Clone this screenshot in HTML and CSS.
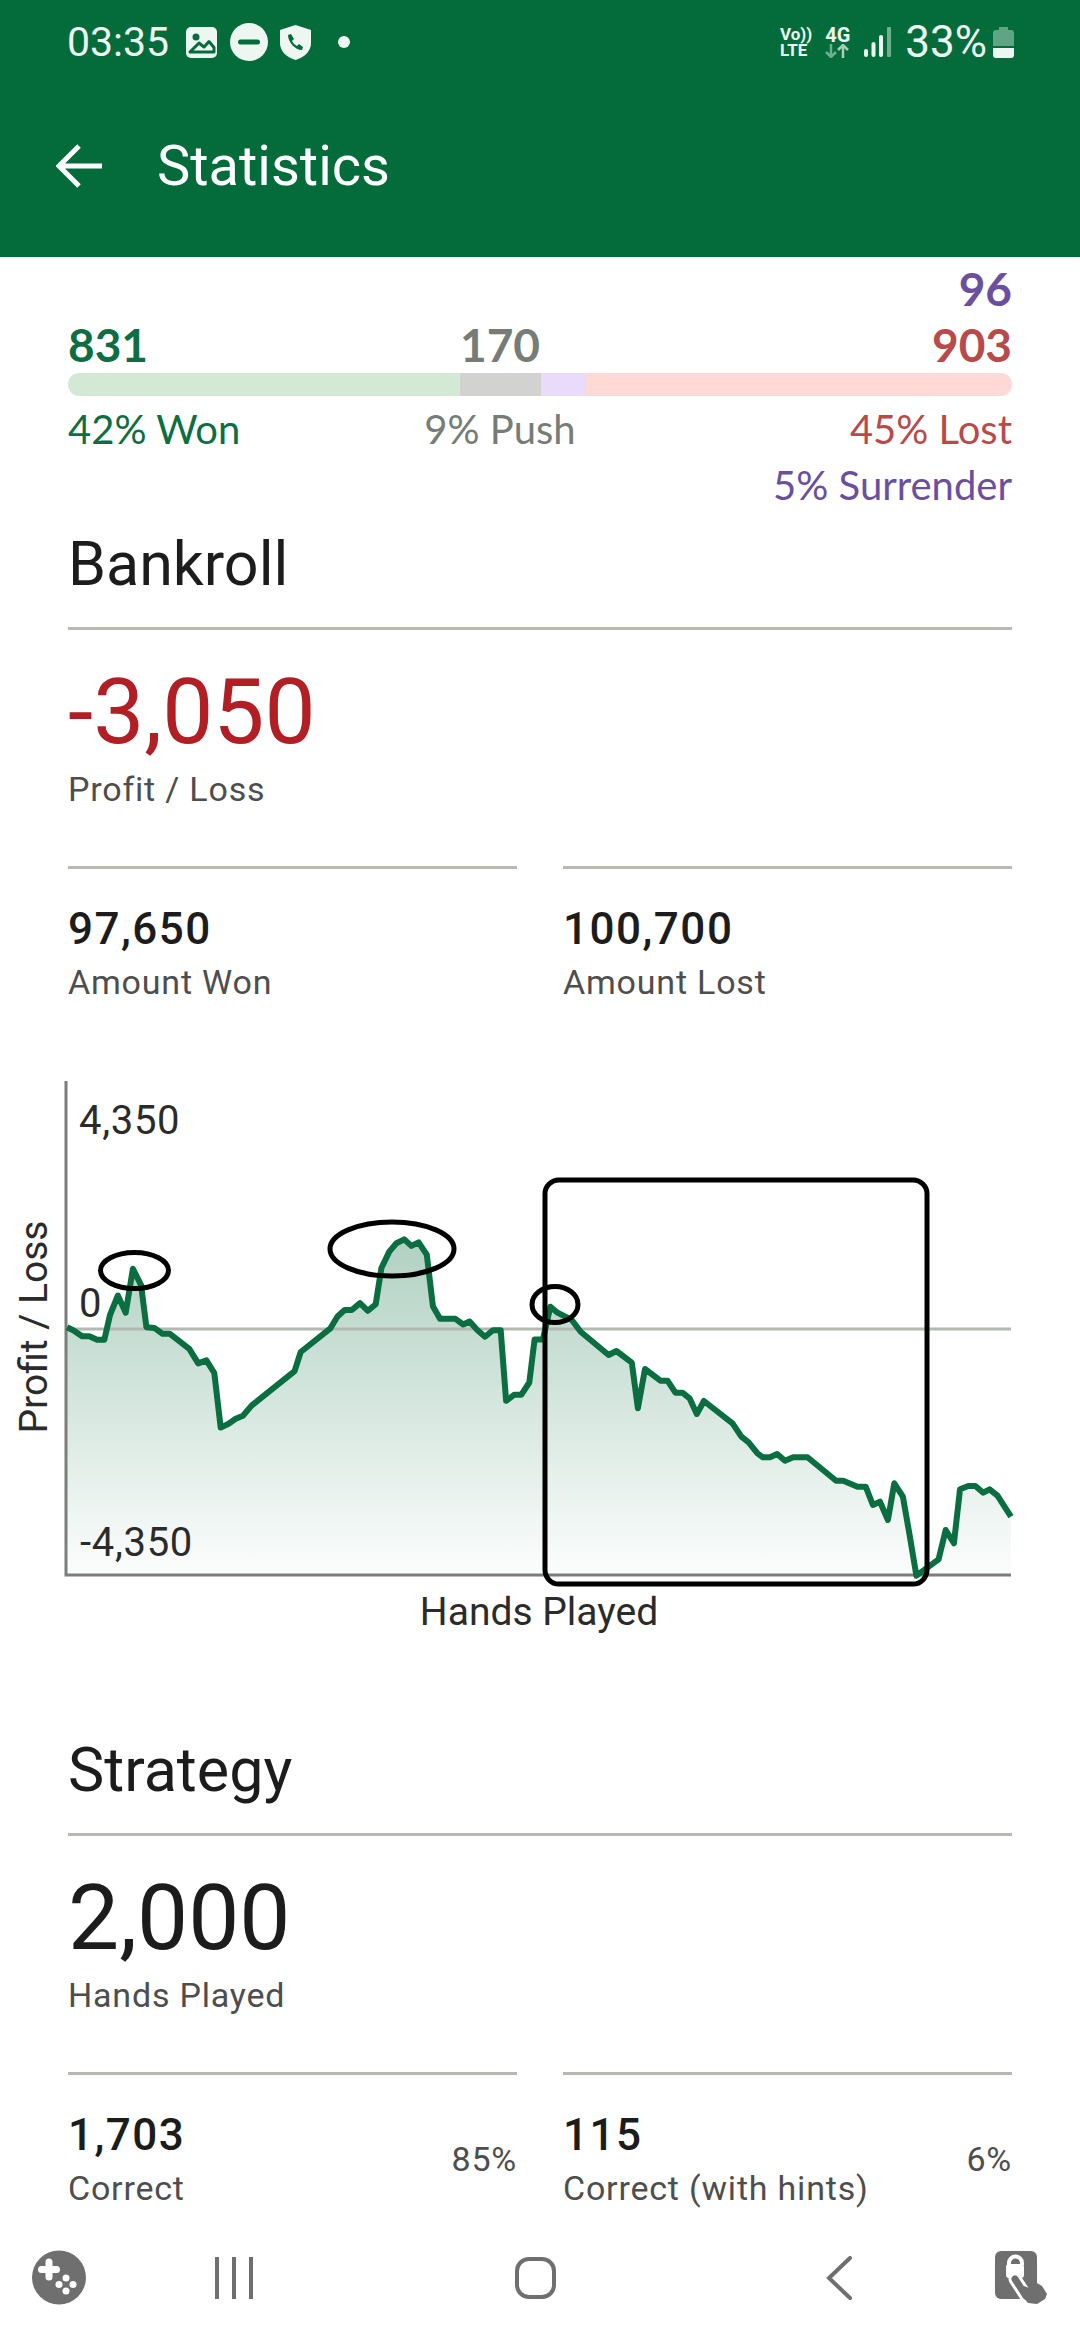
FILE: index.html
```html
<!DOCTYPE html>
<html lang="en">
<head>
    <meta charset="UTF-8">
    <meta name="viewport" content="width=device-width, initial-scale=1.0">
    <title>Statistics</title>
    <link rel="stylesheet" href="styles.css">
</head>
<body>
<div class="page">

    <header class="header">
        <div class="status-bar">
            <div class="status-left">
                <span class="clock">03:35</span>
                <svg class="icon-pic" viewBox="0 0 31 31"><rect width="31" height="31" rx="5" fill="#eef6f1"/><circle cx="10" cy="10" r="3.500" fill="#036c3a"/><path d="M4 25L13 16l5 4 5-5.500 5 6V25z" fill="#eef6f1" stroke="#036c3a" stroke-width="3" stroke-linejoin="round"/></svg>
                <svg class="icon-dnd" viewBox="0 0 38 38"><circle cx="19" cy="19" r="19" fill="#eef6f1"/><rect x="8" y="16.500" width="22" height="5" rx="2.500" fill="#036c3a"/></svg>
                <svg class="icon-shield" viewBox="0 0 31 35"><path d="M15.500 0L31 5v13c0 8-6 14-15.500 17C6 32 0 26 0 18V5z" fill="#eef6f1"/><path d="M8 10l3-1 3 5-2 2c1 2 3 4 5 5l2-2 4 3-1 3c-7 0-14-8-14-15z" fill="#036c3a"/></svg>
                <span class="status-dot"></span>
            </div>
            <div class="status-right">
                <div class="volte"><span>Vo))</span><span>LTE</span></div>
                <div class="net">
                    <span>4G</span>
                    <svg class="net-arrows" viewBox="0 0 25 14"><path d="M6 0v13M1 8l5 5 5-5" fill="none" stroke="#6fae8f" stroke-width="2.500"/><path d="M18 14V1M13 6l5-5 5 5" fill="none" stroke="#a5cdb8" stroke-width="2.500"/></svg>
                </div>
                <svg class="signal" viewBox="0 0 27 30"><rect x="0" y="22" width="4" height="8" rx="2" fill="#eef6f1"/><rect x="7.500" y="15" width="4" height="15" rx="2" fill="#eef6f1"/><rect x="15" y="8" width="4" height="22" rx="2" fill="#eef6f1"/><rect x="23" y="0" width="4" height="30" rx="1" fill="#6fae8f"/></svg>
                <span class="battery-pct">33%</span>
                <svg class="battery" viewBox="0 0 21 31"><path d="M6 0h9v3h3a3 3 0 0 1 3 3v13H0V6a3 3 0 0 1 3-3h3z" fill="#5fa583"/><path d="M0 21h21v7a3 3 0 0 1-3 3H3a3 3 0 0 1-3-3z" fill="#eef6f1"/></svg>
            </div>
        </div>
        <div class="app-bar">
            <svg class="back-arrow" viewBox="0 0 46 44"><path d="M46 22H4M23 2L3 22l20 20" fill="none" stroke="#fff" stroke-width="5"/></svg>
            <h1>Statistics</h1>
        </div>
    </header>

    <main class="content">
        <section class="results">
            <div class="num-extra">96</div>
            <div class="num-row">
                <span class="won">831</span>
                <span class="push num-mid">170</span>
                <span class="lost">903</span>
            </div>
            <div class="bar">
                <div class="seg seg-won"></div>
                <div class="seg seg-push"></div>
                <div class="seg seg-surr"></div>
                <div class="seg seg-lost"></div>
            </div>
            <div class="pct-row">
                <span class="won">42% Won</span>
                <span class="push pct-mid">9% Push</span>
                <span class="lost">45% Lost</span>
            </div>
            <div class="pct-extra">5% Surrender</div>
        </section>

        <section class="section bankroll">
            <h2>Bankroll</h2>
            <div class="big-stat">
                <div class="big-num loss">-3,050</div>
                <div class="stat-label">Profit / Loss</div>
            </div>
            <div class="cols">
                <div class="col">
                    <div class="col-num">97,650</div>
                    <div class="stat-label">Amount Won</div>
                </div>
                <div class="col">
                    <div class="col-num">100,700</div>
                    <div class="stat-label">Amount Lost</div>
                </div>
            </div>
        </section>

        <svg class="chart" viewBox="0 1060 1080 600">
            <defs>
                <linearGradient id="area" x1="0" y1="1239" x2="0" y2="1578" gradientUnits="userSpaceOnUse">
                    <stop offset="0" stop-color="#0a6e41" stop-opacity="0.32"/>
                    <stop offset="1" stop-color="#0a6e41" stop-opacity="0.01"/>
                </linearGradient>
            </defs>
            <path fill="url(#area)" d="M67 1327.2 73.200 1330.200 82.100 1336.300 89.300 1336.300 97.100 1339.800 104.300 1339.800 110 1315 117.900 1295.500 125.700 1312.700 132.900 1268.800 141.100 1285.200 146.400 1327.200 154.300 1327.900 162.500 1333.700 169.600 1333.700 189.300 1348.900 198.200 1363.400 206.400 1360.400 214.300 1373 220.700 1427.600 228.600 1423.700 235.700 1418.800 242.900 1415.700 251.800 1405.400 294.600 1371.100 300.700 1352 330.400 1328.300 337.500 1316.500 344.600 1310 351.800 1310 360 1303.100 367.900 1310.800 375.700 1304.300 381.400 1268 389.300 1251.600 396.400 1243.200 404.300 1239.400 411.400 1245.900 418.600 1242.400 426.800 1254.700 432.900 1306.200 440 1318.800 455.400 1318.800 463.200 1324.500 469.600 1321.500 477.500 1330.200 485 1336.700 492.900 1330.200 500.700 1330.200 506.100 1400.800 514.300 1394.700 521.400 1394.700 529.300 1382.500 534.600 1339.400 542.900 1339.400 550.400 1306.700 557.500 1312.700 571.800 1320 580.700 1331.700 608.600 1355 616.400 1351 631.800 1362.700 637.900 1408.300 645 1369 660.400 1380.700 667.500 1380.700 675.400 1392.700 682.500 1392.700 689.600 1398.300 696.800 1414 703.900 1401 732.500 1423.300 741.400 1436.700 748.600 1442.300 757.500 1453.300 762.900 1457.300 770 1457.300 777.100 1454 785 1460.700 793.200 1457.300 807.500 1457.300 836.100 1480.700 843.200 1480.700 857.500 1486.700 865.700 1486.700 872.900 1505 880 1501.700 887.900 1520 894.300 1483.300 902.900 1496.700 909.300 1533.300 916.400 1575.700 938.600 1559.300 945.700 1530 953.900 1543.300 960 1489.300 968.200 1486 975.400 1486 983.200 1492.700 989.600 1489.300 997.500 1495.700 1005 1507.300 1011 1516.700V1575H67z"/>
            <path class="zero-line" d="M66 1329H1011"/>
            <path class="axis" d="M66 1081V1575H1011"/>
            <path class="line" d="M67 1327.200 73.200 1330.200 82.100 1336.300 89.300 1336.300 97.100 1339.800 104.300 1339.800 110 1315 117.900 1295.500 125.700 1312.700 132.900 1268.800 141.100 1285.200 146.400 1327.200 154.300 1327.900 162.500 1333.700 169.600 1333.700 189.300 1348.900 198.200 1363.400 206.400 1360.400 214.300 1373 220.700 1427.600 228.600 1423.700 235.700 1418.800 242.900 1415.700 251.800 1405.400 294.600 1371.100 300.700 1352 330.400 1328.300 337.500 1316.500 344.600 1310 351.800 1310 360 1303.100 367.900 1310.800 375.700 1304.300 381.400 1268 389.300 1251.600 396.400 1243.200 404.300 1239.400 411.400 1245.900 418.600 1242.400 426.800 1254.700 432.900 1306.200 440 1318.800 455.400 1318.800 463.200 1324.500 469.600 1321.500 477.500 1330.200 485 1336.700 492.900 1330.200 500.700 1330.200 506.100 1400.800 514.300 1394.700 521.400 1394.700 529.300 1382.500 534.600 1339.400 542.900 1339.400 550.400 1306.700 557.500 1312.700 571.800 1320 580.700 1331.700 608.600 1355 616.400 1351 631.800 1362.700 637.900 1408.300 645 1369 660.400 1380.700 667.500 1380.700 675.400 1392.700 682.500 1392.700 689.600 1398.300 696.800 1414 703.900 1401 732.500 1423.300 741.400 1436.700 748.600 1442.300 757.500 1453.300 762.900 1457.300 770 1457.300 777.100 1454 785 1460.700 793.200 1457.300 807.500 1457.300 836.100 1480.700 843.200 1480.700 857.500 1486.700 865.700 1486.700 872.900 1505 880 1501.700 887.900 1520 894.300 1483.300 902.900 1496.700 909.300 1533.300 916.400 1575.700 938.600 1559.300 945.700 1530 953.900 1543.300 960 1489.300 968.200 1486 975.400 1486 983.200 1492.700 989.600 1489.300 997.500 1495.700 1005 1507.300 1011 1516.700"/>
            <text class="tick" x="79" y="1134">4,350</text>
            <text class="tick" x="79" y="1317">0</text>
            <text class="tick" x="80" y="1556">-4,350</text>
            <text class="axis-title" x="539" y="1625" text-anchor="middle">Hands Played</text>
            <text class="axis-title" transform="translate(47 1327) rotate(-90)" text-anchor="middle">Profit / Loss</text>
            <!-- hand drawn marks on top of the chart -->
            <ellipse class="mark" cx="134.500" cy="1270.500" rx="34" ry="18"/>
            <ellipse class="mark" cx="392" cy="1249" rx="62" ry="27"/>
            <ellipse class="mark" cx="555" cy="1304.500" rx="23" ry="18"/>
            <rect class="mark" x="545" y="1180" width="382" height="404" rx="14"/>
        </svg>

        <section class="section strategy">
            <h2>Strategy</h2>
            <div class="big-stat">
                <div class="big-num">2,000</div>
                <div class="stat-label">Hands Played</div>
            </div>
            <div class="cols">
                <div class="col">
                    <div class="col-num">1,703</div>
                    <div class="stat-label">Correct</div>
                    <span class="col-pct">85%</span>
                </div>
                <div class="col">
                    <div class="col-num">115</div>
                    <div class="stat-label">Correct (with hints)</div>
                    <span class="col-pct">6%</span>
                </div>
            </div>
        </section>
    </main>

    <nav class="nav-bar">
        <svg class="nav-game" viewBox="0 0 54 55"><circle cx="27" cy="27.500" r="27" fill="#6f6f6f"/><path d="M17 12v15M9.500 19.500h15" stroke="#fff" stroke-width="7" stroke-linecap="round"/><circle cx="34" cy="28" r="3.500" fill="#fff"/><circle cx="41" cy="34.500" r="3.500" fill="#fff"/><circle cx="34" cy="41" r="3.500" fill="#fff"/><circle cx="27" cy="34.500" r="3.500" fill="#fff"/></svg>
        <svg class="nav-recent" viewBox="0 0 38 42"><path d="M2 0v42M19 0v42M36 0v42" stroke="#6f6f6f" stroke-width="4" stroke-linecap="round"/></svg>
        <svg class="nav-home" viewBox="0 0 41 42"><rect x="2" y="2" width="37" height="38" rx="12" fill="none" stroke="#6f6f6f" stroke-width="4"/></svg>
        <svg class="nav-back" viewBox="0 0 26 44"><path d="M24 2L3 22l21 20" fill="none" stroke="#6f6f6f" stroke-width="4" stroke-linecap="round"/></svg>
        <svg class="nav-lock" viewBox="0 0 52 53"><rect width="42" height="48" rx="6" fill="#6f6f6f"/><path d="M14 14v-2a6.500 6.500 0 0 1 13 0v2" fill="none" stroke="#fff" stroke-width="4"/><rect x="11" y="13" width="18" height="14" rx="3" fill="#fff"/><path d="M20 28l11 17" stroke="#fff" stroke-width="13" stroke-linecap="round"/><path d="M20 28l11 17" stroke="#6f6f6f" stroke-width="7" stroke-linecap="round"/><path d="M29 35l5 2 8-5 5 3 5 8-2 5-8 5-9-1-6-7z" fill="#6f6f6f"/></svg>
    </nav>

</div>
</body>
</html>
```
FILE: styles.css
```css
* {
    box-sizing: border-box;
}
body {
    margin: 0;
    background-color: #fff;
    font-family: Roboto, sans-serif;
    color: #1c1c1c;
}
.page {
    width: 1080px;
    height: 2340px;
    display: flex;
    flex-direction: column;
    overflow: hidden;
}

/* header */
.header {
    height: 257px;
    background-color: #036c3a;
    flex-shrink: 0;
}
.status-bar {
    height: 84px;
    padding: 0 66px 0 67px;
    display: flex;
    justify-content: space-between;
    align-items: center;
    color: #eef6f1;
}
.status-left, .status-right {
    display: flex;
    align-items: center;
}
.clock {
    font-size: 41px;
    width: 119px;
}
.icon-pic {
    width: 31px;
    height: 31px;
}
.icon-dnd {
    width: 38px;
    height: 38px;
    margin-left: 13px;
}
.icon-shield {
    width: 31px;
    height: 35px;
    margin-left: 12px;
}
.status-dot {
    width: 12px;
    height: 12px;
    border-radius: 50%;
    background-color: #eef6f1;
    margin-left: 27px;
}
.volte {
    display: flex;
    flex-direction: column;
    font-size: 17px;
    font-weight: 700;
    line-height: 16px;
}
.net {
    display: flex;
    flex-direction: column;
    margin-left: 13px;
    font-size: 20px;
    font-weight: 700;
    line-height: 18px;
}
.net-arrows {
    width: 25px;
    height: 14px;
}
.signal {
    width: 27px;
    height: 30px;
    margin-left: 14px;
}
.battery-pct {
    font-size: 44px;
    margin-left: 14px;
}
.battery {
    width: 21px;
    height: 31px;
    margin-left: 6px;
}
.app-bar {
    height: 166px;
    display: flex;
    align-items: center;
    padding-left: 56px;
    padding-bottom: 3px;
}
.back-arrow {
    width: 46px;
    height: 44px;
}
h1 {
    margin: 0 0 0 55px;
    font-size: 56px;
    font-weight: 400;
    color: #fff;
}

/* main column */
.content {
    flex: 1;
    min-height: 0;
    overflow: hidden;
}
.results {
    padding: 4px 68px 0;
    font-family: Lato, sans-serif;
}
.won { color: #0c6e42; }
.push { color: #767c76; }
.lost { color: #b94a4a; }
.num-extra {
    color: #6b4f9f;
    font-size: 46px;
    font-weight: 700;
    line-height: 56px;
    text-align: right;
}
.num-row, .pct-row {
    display: flex;
    justify-content: space-between;
    position: relative;
}
.num-row {
    font-size: 46px;
    font-weight: 700;
    line-height: 56px;
}
.num-mid, .pct-mid {
    position: absolute;
    left: 392px;
    width: 80px;
    text-align: center;
}
.pct-mid {
    left: 332px;
    width: 200px;
}
.bar {
    display: flex;
    height: 23px;
    border-radius: 11px;
    overflow: hidden;
}
.seg-won { width: 392px; background-color: #d4e8d6; }
.seg-push { width: 81px; background-color: #d2d3d1; }
.seg-surr { width: 45px; background-color: #e9dcfb; }
.seg-lost { flex: 1; background-color: #ffd9d6; }
.pct-row {
    margin-top: 5px;
    font-size: 40px;
    line-height: 56px;
}
.pct-extra {
    color: #6b4f9f;
    font-size: 40px;
    line-height: 56px;
    text-align: right;
}
.section {
    padding: 0 68px;
}
h2 {
    margin: 0;
    font-size: 61px;
    font-weight: 400;
    line-height: 72px;
    padding-bottom: 27px;
    border-bottom: 3px solid #b8b8b4;
}
.bankroll {
    margin-top: 15px;
}
.big-stat {
    padding-top: 28px;
}
.big-num {
    font-size: 91px;
    line-height: 109px;
}
.loss {
    color: #b11f24;
}
.stat-label {
    font-size: 34px;
    line-height: 44px;
    color: #4e4e4e;
    letter-spacing: 0.8px;
}
.cols {
    display: grid;
    grid-template-columns: 449px 449px;
    justify-content: space-between;
    margin-top: 55px;
}
.col {
    border-top: 3px solid #b8b8b4;
    padding-top: 30px;
    position: relative;
}
.col-num {
    font-size: 44px;
    font-weight: 500;
    line-height: 61px;
    letter-spacing: 1.5px;
}
.col-pct {
    position: absolute;
    right: 0;
    top: 64px;
    font-size: 34px;
    color: #4e4e4e;
    letter-spacing: 0.8px;
}

/* chart */
.chart {
    display: block;
    width: 1080px;
    height: 600px;
    margin-top: 56px;
}
.zero-line {
    fill: none;
    stroke: #b4b8b2;
    stroke-width: 3;
}
.axis {
    fill: none;
    stroke: #7b7f7c;
    stroke-width: 3;
}
.line {
    fill: none;
    stroke: #0a6e41;
    stroke-width: 6;
    stroke-linejoin: round;
}
.tick, .axis-title {
    font-family: Roboto, sans-serif;
    fill: #2b2b2b;
}
.tick {
    font-size: 40px;
    letter-spacing: 0.7px;
}
.axis-title {
    font-size: 39px;
}
.mark {
    fill: none;
    stroke: #000;
    stroke-width: 5;
}

.strategy {
    margin-top: 74px;
}

/* navigation bar */
.nav-bar {
    height: 125px;
    flex-shrink: 0;
    display: flex;
    align-items: center;
    padding-left: 32px;
    background-color: #fff;
}
.nav-game { width: 54px; height: 55px; }
.nav-recent { width: 38px; height: 42px; margin-left: 129px; }
.nav-home { width: 41px; height: 42px; margin-left: 262px; }
.nav-back { width: 26px; height: 44px; margin-left: 270px; }
.nav-lock { width: 52px; height: 53px; margin-left: 143px; }
```
